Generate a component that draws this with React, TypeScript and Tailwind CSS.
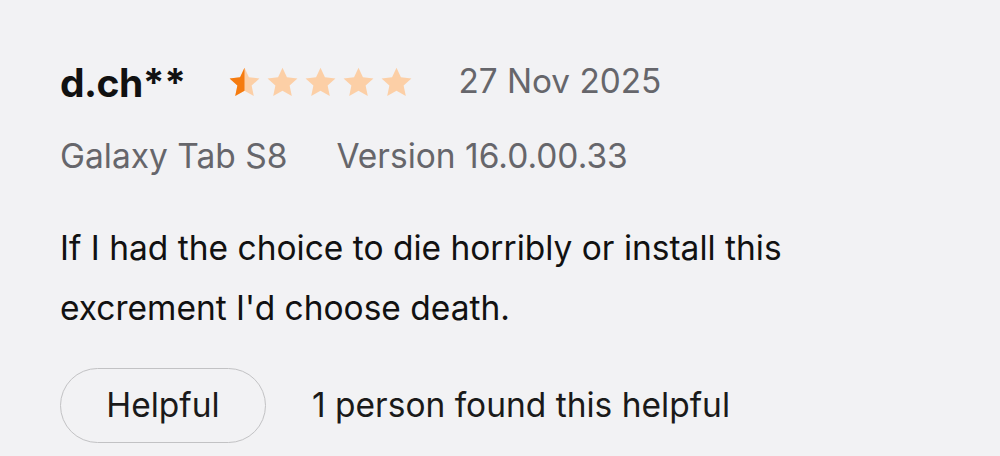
import React from "react";

const Star = ({ fill, half }: { fill: string; half?: boolean }) => {
  const d = "M12 1.8l3.05 6.6 7.2.8-5.37 4.9 1.5 7.1L12 17.6l-6.38 3.6 1.5-7.1L1.75 9.2l7.2-.8z";
  return (
    <svg width="35" height="35" viewBox="0 0 24 24" className="block">
      <path d={d} fill={fill} />
      {half && (
        <path d={d} fill="#f57b0f" style={{ clipPath: "inset(0 50% 0 0)" }} />
      )}
    </svg>
  );
};

export default function App() {
  return (
    <div
      className="w-[1000px] h-[456px] bg-[#f2f2f4] pl-[60px] overflow-hidden"
      style={{ fontFamily: "Inter, 'Noto Sans', sans-serif" }}
    >
      <div className="flex items-center h-[48px] mt-[58px]">
        <span className="text-[39px] font-bold text-[#111111] leading-none tracking-[-0.5px]">d.ch**</span>
        <div className="flex items-center gap-[3px] ml-[42px]">
          <Star fill="#fccfa6" half />
          <Star fill="#fccfa6" />
          <Star fill="#fccfa6" />
          <Star fill="#fccfa6" />
          <Star fill="#fccfa6" />
        </div>
        <span className="ml-[44px] text-[33.3px] text-[#66666b] leading-none">27 Nov 2025</span>
      </div>
      <div className="flex items-center h-[40px] mt-[31px] text-[33.5px] text-[#66666b] leading-none">
        <span>Galaxy Tab S8</span>
        <span className="ml-[49px]">Version 16.0.00.33</span>
      </div>
      <div className="mt-[41px] text-[33.5px] leading-[60px] text-[#111111]">
        <div>If I had the choice to die horribly or install this</div>
        <div>excrement I'd choose death.</div>
      </div>
      <div className="flex items-center mt-[30px]">
        <button className="w-[206px] h-[75px] rounded-full border-[1.5px] border-[#c2c2c4] text-[33.5px] text-[#1a1a1a] flex items-center justify-center">
          Helpful
        </button>
        <span className="ml-[46px] text-[33.5px] text-[#1a1a1a]">1 person found this helpful</span>
      </div>
    </div>
  );
}
